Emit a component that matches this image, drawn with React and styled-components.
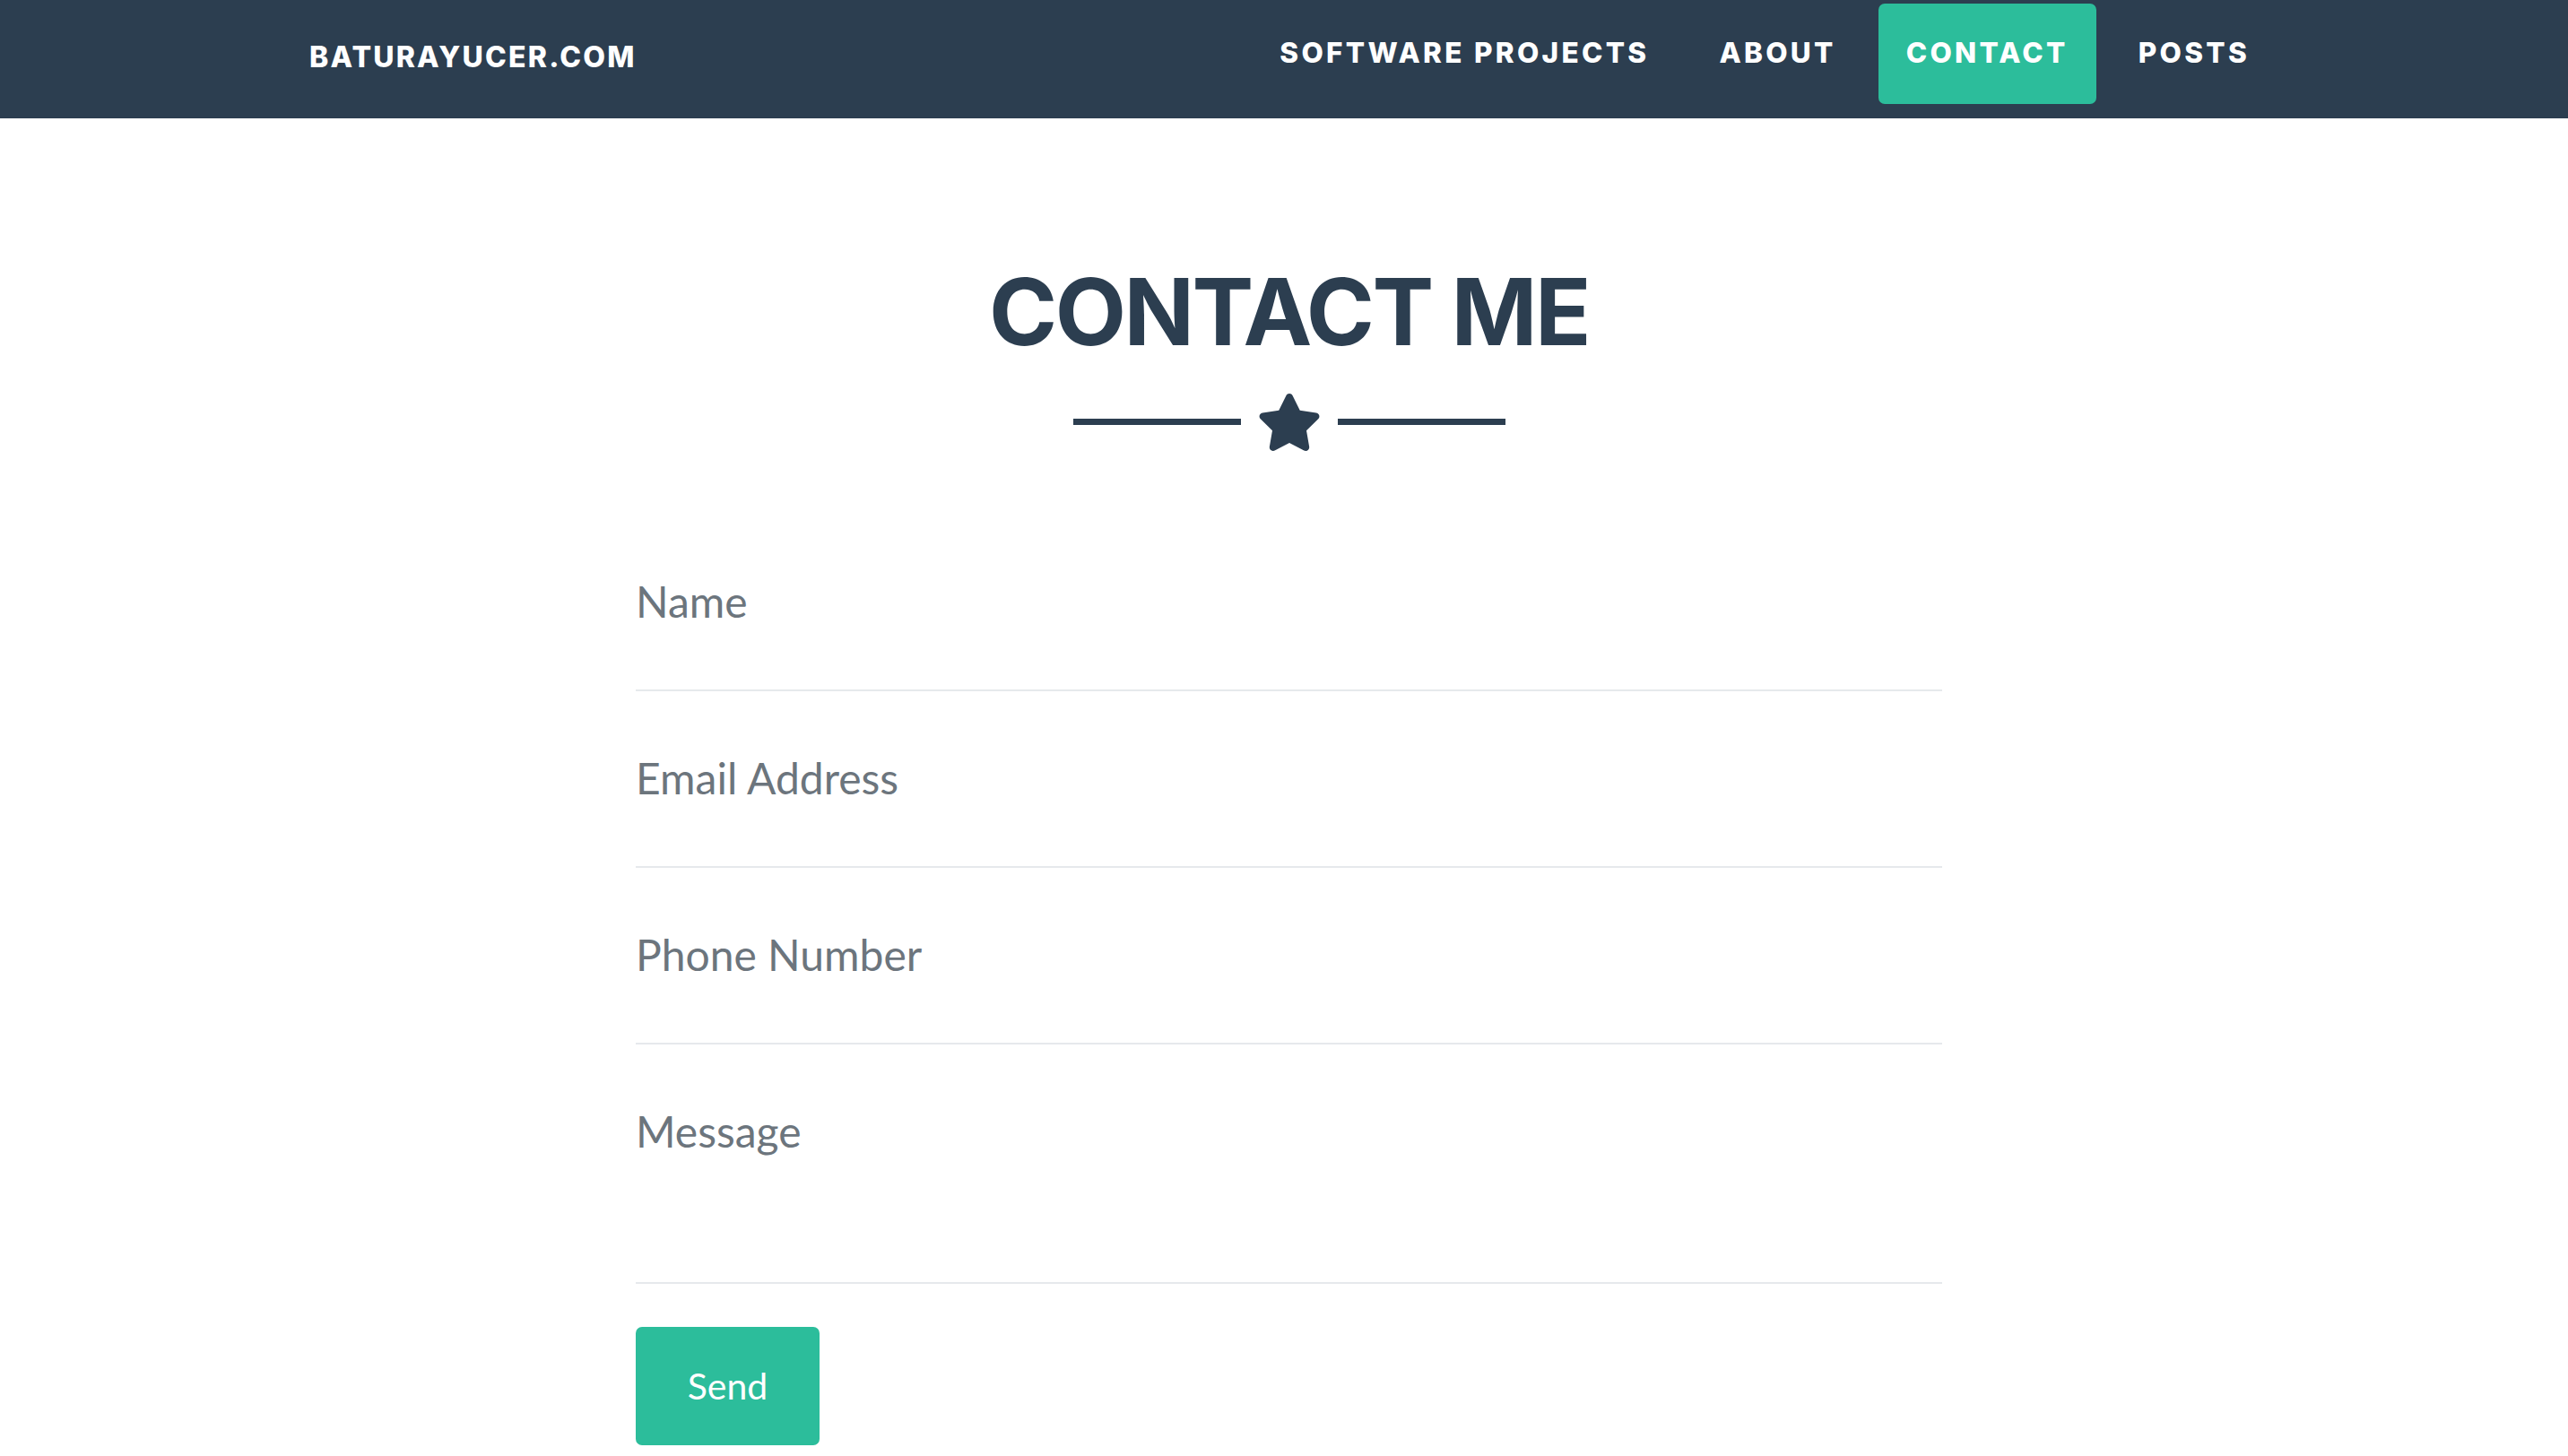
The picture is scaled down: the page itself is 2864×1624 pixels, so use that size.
import React from 'react'
import styled, { createGlobalStyle } from 'styled-components';

const GlobalStyle = createGlobalStyle`
html, body {
  margin:0;
  padding:0;
  background:#ffffff;
  overflow:hidden;
}
* {
  box-sizing:border-box;
}
`;

const Page = styled.div`
display:flex;
flex-direction:column;
width:100%;
min-height:100vh;
`;

const NavBar = styled.nav`
display:flex;
flex-direction:row;
justify-content:space-between;
align-items:flex-start;
height:132px;
padding:4px 324px 0 345px;
background:#2c3e50;
`;

const Brand = styled.a`
display:flex;
align-items:center;
height:118px;
font-family:Inter, "Liberation Sans", sans-serif;
font-weight:800;
font-size:32px;
letter-spacing:2.2px;
color:#ffffff;
text-decoration:none;
text-transform:uppercase;
`;

const NavList = styled.ul`
display:flex;
flex-direction:row;
gap:16px;
margin:0;
padding:0;
list-style:none;
`;

const NavLink = styled.a`
display:flex;
align-items:center;
height:112px;
padding:0 31px 3px;
border-radius:7px;
font-family:Inter, "Liberation Sans", sans-serif;
font-weight:800;
font-size:31.5px;
letter-spacing:3.3px;
color:#ffffff;
text-decoration:none;
text-transform:uppercase;
background:${props => props.$active ? '#2cbd9b' : 'transparent'};
`;

const Main = styled.section`
display:flex;
flex-direction:column;
align-items:center;
padding:154px 0 0 11px;
`;

const Heading = styled.h2`
margin:0;
font-family:Inter, "Liberation Sans", sans-serif;
font-weight:700;
font-size:103px;
line-height:1.2;
letter-spacing:-2.5px;
color:#2c3e50;
text-transform:uppercase;
`;

const Divider = styled.div`
display:flex;
flex-direction:row;
align-items:center;
gap:18px;
height:64px;
margin-top:29px;
`;

const DividerLine = styled.div`
width:187px;
height:7px;
background:#2c3e50;
`;

const StarIcon = styled.svg`
width:72px;
height:64px;
fill:#2c3e50;
`;

const Form = styled.form`
display:flex;
flex-direction:column;
align-items:flex-start;
width:1457px;
margin-top:71px;
`;

const Field = styled.div`
width:100%;
padding:61px 0 62px;
border-bottom:2px solid #e6e9ec;
`;

const inputFont = `
display:block;
width:100%;
margin:0;
padding:0;
border:none;
outline:none;
background:transparent;
font-family:Lato, "Liberation Sans", sans-serif;
font-size:48px;
line-height:72px;
color:#212529;
&::placeholder {
  color:#6c757d;
  opacity:1;
}
`;

const TextInput = styled.input`
${inputFont}
height:72px;
`;

const TextArea = styled.textarea`
${inputFont}
height:142px;
resize:none;
overflow:hidden;
`;

const SendButton = styled.button`
margin-top:48px;
width:205px;
height:132px;
padding:0;
border:none;
border-radius:7px;
background:#2cbd9b;
font-family:Lato, "Liberation Sans", sans-serif;
font-size:41px;
line-height:1.5;
color:#ffffff;
cursor:pointer;
`;

const links = [
    { label: 'Software Projects' },
    { label: 'About' },
    { label: 'Contact', active: true },
    { label: 'Posts' },
];

const fields = [
    { placeholder: 'Name', type: 'text' },
    { placeholder: 'Email Address', type: 'email' },
    { placeholder: 'Phone Number', type: 'tel' },
];

export default function App() {
    return (
        <Page>
            <GlobalStyle />
            <NavBar>
                <Brand href="#">baturayucer.com</Brand>
                <NavList>
                    {links.map((link) => (
                        <li key={link.label}>
                            <NavLink href="#" $active={link.active}>{link.label}</NavLink>
                        </li>
                    ))}
                </NavList>
            </NavBar>
            <Main>
                <Heading>Contact Me</Heading>
                <Divider>
                    <DividerLine />
                    <StarIcon viewBox="0 0 576 512">
                        <path d="M259.3 17.8L194 150.2 47.9 171.5c-26.2 3.8-36.7 36.1-17.7 54.6l105.7 103-25 145.5c-4.5 26.3 23.2 46 46.4 33.7L288 439.6l130.7 68.7c23.2 12.2 50.9-7.4 46.4-33.7l-25-145.5 105.7-103c19-18.5 8.5-50.8-17.7-54.6L382 150.2 316.7 17.8c-11.7-23.6-45.6-23.9-57.4 0z" />
                    </StarIcon>
                    <DividerLine />
                </Divider>
                <Form onSubmit={(e) => e.preventDefault()}>
                    {fields.map((field) => (
                        <Field key={field.placeholder}>
                            <TextInput type={field.type} placeholder={field.placeholder} />
                        </Field>
                    ))}
                    <Field>
                        <TextArea placeholder="Message" />
                    </Field>
                    <SendButton type="submit">Send</SendButton>
                </Form>
            </Main>
        </Page>
    )
}
